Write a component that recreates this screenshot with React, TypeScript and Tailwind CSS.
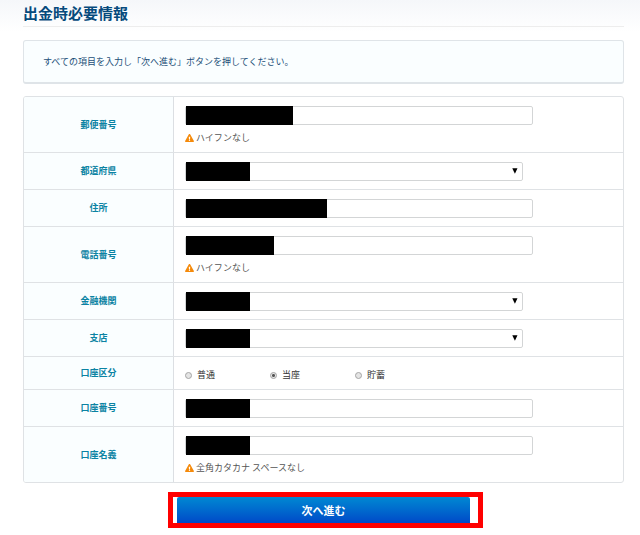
import { useState, type ReactNode } from "react";
import { FaExclamationTriangle } from "react-icons/fa";

type RowProps = {
  label: string;
  htmlFor: string;
  hint?: string;
  children: ReactNode;
};

const rowClass = "flex border-b border-[#dfe2e5] last:border-b-0";
const headClass =
  "flex w-[150px] shrink-0 items-center justify-center border-r border-[#dcdfe3] bg-[#fafeff] text-[9px] leading-3 font-bold text-[#0b83a3]";

function Row({ label, htmlFor, hint, children }: RowProps) {
  return (
    <div className={rowClass}>
      <label htmlFor={htmlFor} className={headClass}>
        {label}
      </label>
      <div className="min-w-0 flex-1 px-[11px] pt-[9px] pb-2">
        {children}
        {hint && (
          <p className="mt-[7px] flex items-center gap-0.5 text-[9px] leading-3 text-[#555]">
            <FaExclamationTriangle className="h-2 w-[9px] text-[#f58a0b]" aria-hidden="true" />
            {hint}
          </p>
        )}
      </div>
    </div>
  );
}

// Solid bar that hides the personal data held in a field.
function Mask({ width }: { width: string }) {
  return <span className={`absolute top-0 left-px h-[19px] bg-black ${width}`} />;
}

function TextField({ id, mask }: { id: string; mask: string }) {
  return (
    <div className="relative h-[19px] w-[348px] max-w-full">
      <input
        id={id}
        type="text"
        className="block h-full w-full rounded-[2px] border border-[#d3d5d6] bg-white px-1 text-[9px]"
      />
      <Mask width={mask} />
    </div>
  );
}

function SelectField({ id, mask }: { id: string; mask: string }) {
  return (
    <div className="relative h-[19px] w-[338px] max-w-full">
      <select
        id={id}
        className="block h-full w-full appearance-none rounded-[2px] border border-[#d3d5d6] bg-white px-1 text-[9px]"
      >
        <option value="" />
      </select>
      <svg
        viewBox="0 0 6 6"
        className="pointer-events-none absolute top-1.5 right-[5px] size-1.5"
        aria-hidden="true"
      >
        <path d="M0.3 0.3h5.2L2.9 5.8z" fill="#000" />
      </svg>
      <Mask width={mask} />
    </div>
  );
}

const accountTypes = ["普通", "当座", "貯蓄"];

export default function App() {
  const [accountType, setAccountType] = useState("当座");

  return (
    <main
      className="bg-linear-to-b from-[#f5f7fa] to-white to-[32px] pr-4 pb-[7px] pl-[23px] font-['Noto_Sans_CJK_JP',sans-serif]"
      lang="ja"
    >
      <h1 className="border-b border-[#ededed] text-[15px] leading-[26px] font-bold text-[#064a7c]">
        出金時必要情報
      </h1>

      <p className="mt-[13px] rounded-[3px] border border-b-2 border-[#dfe4e8] bg-[#fafeff] px-[19px] py-3 text-[9px] leading-[17px] text-[#1c4f78]">
        すべての項目を入力し「次へ進む」ボタンを押してください。
      </p>

      <form onSubmit={(e) => e.preventDefault()}>
        <div className="mt-3 overflow-hidden rounded-[3px] border border-[#dfe2e5] bg-white">
          <Row label="郵便番号" htmlFor="postal" hint="ハイフンなし">
            <TextField id="postal" mask="w-[107px]" />
          </Row>
          <Row label="都道府県" htmlFor="prefecture">
            <SelectField id="prefecture" mask="w-16" />
          </Row>
          <Row label="住所" htmlFor="address">
            <TextField id="address" mask="w-[141px]" />
          </Row>
          <Row label="電話番号" htmlFor="phone" hint="ハイフンなし">
            <TextField id="phone" mask="w-[88px]" />
          </Row>
          <Row label="金融機関" htmlFor="bank">
            <SelectField id="bank" mask="w-16" />
          </Row>
          <Row label="支店" htmlFor="branch">
            <SelectField id="branch" mask="w-16" />
          </Row>
          <div className={rowClass} role="radiogroup" aria-labelledby="account-type">
            <span id="account-type" className={headClass}>
              口座区分
            </span>
            <div className="flex h-8 flex-1 items-center px-[11px] pt-1">
              {accountTypes.map((type) => (
                <label
                  key={type}
                  className="flex w-[85px] items-center gap-[5px] text-[9px] leading-3 text-[#333]"
                >
                  <input
                    type="radio"
                    name="account-type"
                    value={type}
                    checked={accountType === type}
                    onChange={() => setAccountType(type)}
                    className="size-[7px] appearance-none rounded-full border border-[#a5a5a5] bg-[#e4e4e4] checked:bg-[radial-gradient(circle,#555_1px,#e4e4e4_2px)]"
                  />
                  {type}
                </label>
              ))}
            </div>
          </div>
          <Row label="口座番号" htmlFor="account-number">
            <TextField id="account-number" mask="w-16" />
          </Row>
          <Row label="口座名義" htmlFor="account-name" hint="全角カタカナ スペースなし">
            <TextField id="account-name" mask="w-16" />
          </Row>
        </div>

        <div className="mt-[9px] flex justify-center pl-1">
          <div className="w-[315px] max-w-full border-[5px] border-[#f00] bg-white pr-2 pl-1">
            <button
              type="submit"
              className="block h-[26px] w-full rounded-t-[2px] bg-linear-to-b from-[#0588d2] to-[#0048c8] text-[11px] font-bold text-white"
            >
              次へ進む
            </button>
          </div>
        </div>
      </form>
    </main>
  );
}
